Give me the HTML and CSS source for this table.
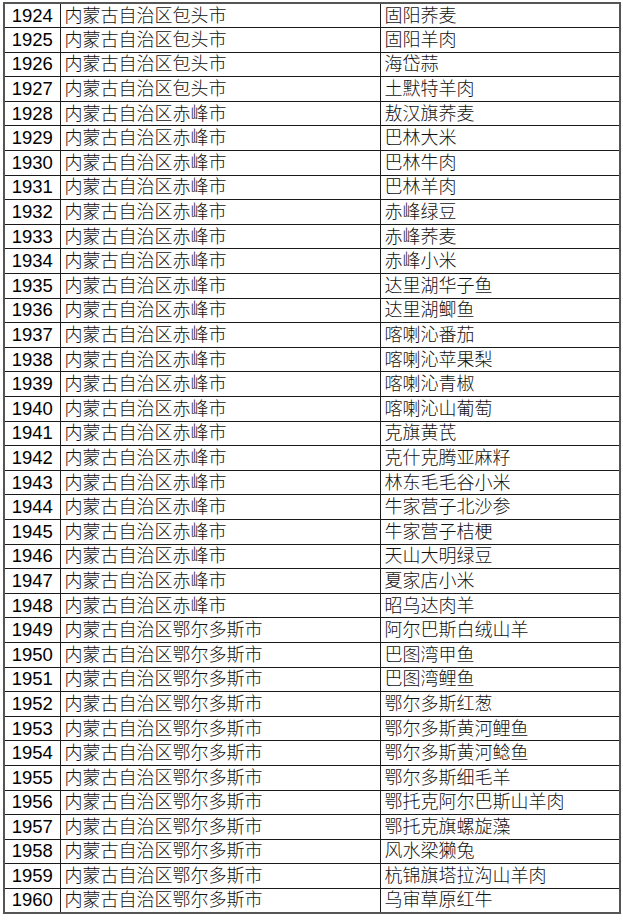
FILE: index.html
```html
<!DOCTYPE html>
<html lang="zh">
<head>
<meta charset="utf-8">
<link rel="stylesheet" href="styles.css">
</head>
<body>
<table class="list">
<colgroup><col class="c-num"><col class="c-region"><col class="c-product"></colgroup>
<tbody>
<tr><td class="num">1924</td><td>内蒙古自治区包头市</td><td>固阳荞麦</td></tr>
<tr><td class="num">1925</td><td>内蒙古自治区包头市</td><td>固阳羊肉</td></tr>
<tr><td class="num">1926</td><td>内蒙古自治区包头市</td><td>海岱蒜</td></tr>
<tr><td class="num">1927</td><td>内蒙古自治区包头市</td><td>土默特羊肉</td></tr>
<tr><td class="num">1928</td><td>内蒙古自治区赤峰市</td><td>敖汉旗荞麦</td></tr>
<tr><td class="num">1929</td><td>内蒙古自治区赤峰市</td><td>巴林大米</td></tr>
<tr><td class="num">1930</td><td>内蒙古自治区赤峰市</td><td>巴林牛肉</td></tr>
<tr><td class="num">1931</td><td>内蒙古自治区赤峰市</td><td>巴林羊肉</td></tr>
<tr><td class="num">1932</td><td>内蒙古自治区赤峰市</td><td>赤峰绿豆</td></tr>
<tr><td class="num">1933</td><td>内蒙古自治区赤峰市</td><td>赤峰荞麦</td></tr>
<tr><td class="num">1934</td><td>内蒙古自治区赤峰市</td><td>赤峰小米</td></tr>
<tr><td class="num">1935</td><td>内蒙古自治区赤峰市</td><td>达里湖华子鱼</td></tr>
<tr><td class="num">1936</td><td>内蒙古自治区赤峰市</td><td>达里湖鲫鱼</td></tr>
<tr><td class="num">1937</td><td>内蒙古自治区赤峰市</td><td>喀喇沁番茄</td></tr>
<tr><td class="num">1938</td><td>内蒙古自治区赤峰市</td><td>喀喇沁苹果梨</td></tr>
<tr><td class="num">1939</td><td>内蒙古自治区赤峰市</td><td>喀喇沁青椒</td></tr>
<tr><td class="num">1940</td><td>内蒙古自治区赤峰市</td><td>喀喇沁山葡萄</td></tr>
<tr><td class="num">1941</td><td>内蒙古自治区赤峰市</td><td>克旗黄芪</td></tr>
<tr><td class="num">1942</td><td>内蒙古自治区赤峰市</td><td>克什克腾亚麻籽</td></tr>
<tr><td class="num">1943</td><td>内蒙古自治区赤峰市</td><td>林东毛毛谷小米</td></tr>
<tr><td class="num">1944</td><td>内蒙古自治区赤峰市</td><td>牛家营子北沙参</td></tr>
<tr><td class="num">1945</td><td>内蒙古自治区赤峰市</td><td>牛家营子桔梗</td></tr>
<tr><td class="num">1946</td><td>内蒙古自治区赤峰市</td><td>天山大明绿豆</td></tr>
<tr><td class="num">1947</td><td>内蒙古自治区赤峰市</td><td>夏家店小米</td></tr>
<tr><td class="num">1948</td><td>内蒙古自治区赤峰市</td><td>昭乌达肉羊</td></tr>
<tr><td class="num">1949</td><td>内蒙古自治区鄂尔多斯市</td><td>阿尔巴斯白绒山羊</td></tr>
<tr><td class="num">1950</td><td>内蒙古自治区鄂尔多斯市</td><td>巴图湾甲鱼</td></tr>
<tr><td class="num">1951</td><td>内蒙古自治区鄂尔多斯市</td><td>巴图湾鲤鱼</td></tr>
<tr><td class="num">1952</td><td>内蒙古自治区鄂尔多斯市</td><td>鄂尔多斯红葱</td></tr>
<tr><td class="num">1953</td><td>内蒙古自治区鄂尔多斯市</td><td>鄂尔多斯黄河鲤鱼</td></tr>
<tr><td class="num">1954</td><td>内蒙古自治区鄂尔多斯市</td><td>鄂尔多斯黄河鲶鱼</td></tr>
<tr><td class="num">1955</td><td>内蒙古自治区鄂尔多斯市</td><td>鄂尔多斯细毛羊</td></tr>
<tr><td class="num">1956</td><td>内蒙古自治区鄂尔多斯市</td><td>鄂托克阿尔巴斯山羊肉</td></tr>
<tr><td class="num">1957</td><td>内蒙古自治区鄂尔多斯市</td><td>鄂托克旗螺旋藻</td></tr>
<tr><td class="num">1958</td><td>内蒙古自治区鄂尔多斯市</td><td>风水梁獭兔</td></tr>
<tr><td class="num">1959</td><td>内蒙古自治区鄂尔多斯市</td><td>杭锦旗塔拉沟山羊肉</td></tr>
<tr><td class="num">1960</td><td>内蒙古自治区鄂尔多斯市</td><td>乌审草原红牛</td></tr>
</tbody>
</table>
</body>
</html>
```
FILE: styles.css
```css
html, body {
  margin: 0;
  padding: 0;
  background: #ffffff;
}
body {
  padding: 2px 0 0 3px;
}
.list {
  border-collapse: collapse;
  table-layout: fixed;
  width: 616px;
  border: 2px solid #555;
  font-family: "Liberation Sans", "Noto Sans CJK SC", sans-serif;
  font-size: 18px;
  font-weight: 300;
  color: #111;
}
.c-num { width: 56px; }
.c-region { width: 320px; }
.c-product { width: 240px; }
.list tr {
  height: 24.6px;
}
.list td {
  border: 1px solid #1a1a1a;
  padding: 0 4px;
  line-height: 22px;
  white-space: nowrap;
  overflow: hidden;
  vertical-align: middle;
}
.list td.num {
  text-align: center;
  padding: 0 2px;
  font-size: 18.5px;
  font-weight: 400;
  color: #000;
}
```
